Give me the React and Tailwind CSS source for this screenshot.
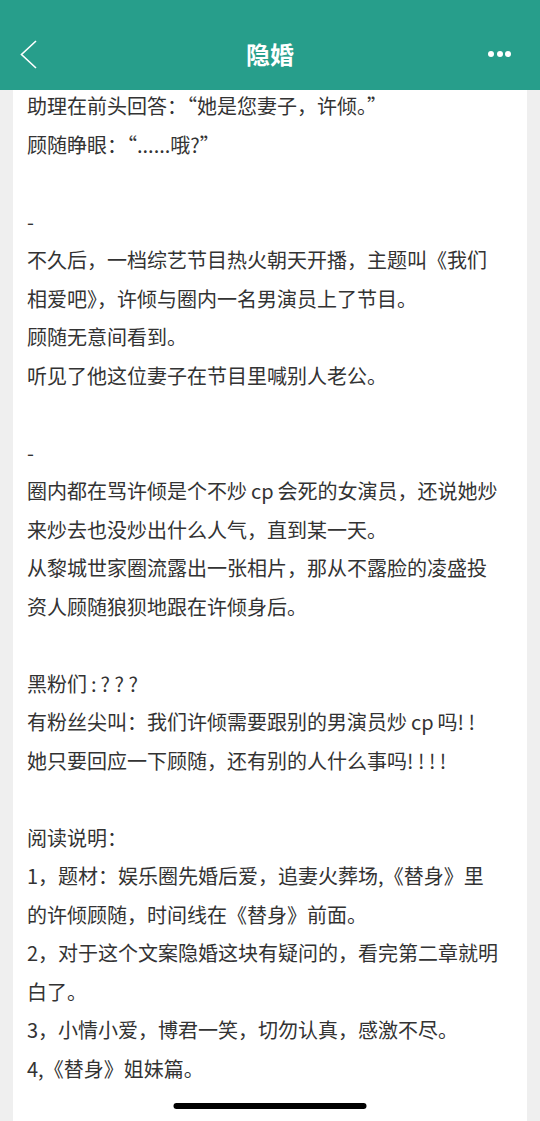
import React from 'react';

const lines = [
  '助理在前头回答：“她是您妻子，许倾。”',
  '顾随睁眼：“......哦?”',
  '',
  '-',
  '不久后，一档综艺节目热火朝天开播，主题叫《我们',
  '相爱吧》，许倾与圈内一名男演员上了节目。',
  '顾随无意间看到。',
  '听见了他这位妻子在节目里喊别人老公。',
  '',
  '-',
  ['圈内都在骂许倾是个不炒', 'cp', '会死的女演员，还说她炒'],
  '来炒去也没炒出什么人气，直到某一天。',
  '从黎城世家圈流露出一张相片，那从不露脸的凌盛投',
  '资人顾随狼狈地跟在许倾身后。',
  '',
  ['黑粉们', ':', '? ? ?'],
  ['有粉丝尖叫：我们许倾需要跟别的男演员炒', 'cp', '吗! !'],
  '她只要回应一下顾随，还有别的人什么事吗! ! ! !',
  '',
  '阅读说明：',
  '1，题材：娱乐圈先婚后爱，追妻火葬场,《替身》里',
  '的许倾顾随，时间线在《替身》前面。',
  '2，对于这个文案隐婚这块有疑问的，看完第二章就明',
  '白了。',
  '3，小情小爱，博君一笑，切勿认真，感激不尽。',
  '4,《替身》姐妹篇。',
];

const Line = ({ text }) => {
  if (Array.isArray(text)) {
    return (
      <div className="whitespace-pre">
        {text[0]}
        <span className="px-[4px]">{text[1]}</span>
        {text[2]}
      </div>
    );
  }
  return <div className="whitespace-pre h-[38.5px]">{text}</div>;
};

export default function App() {
  return (
    <div className="relative h-[1121px] w-[540px] overflow-hidden bg-[#efefef] flex flex-col font-['Noto_Sans_CJK_SC',sans-serif]">
      {/* 顶部导航 */}
      <div className="h-[90px] shrink-0 bg-[#279e8b] pt-[18px] flex items-center justify-between pl-[20px] pr-[29px] relative z-10">
        <svg width="17" height="29" viewBox="0 0 17 29" fill="none">
          <polyline points="16,1 1.5,14.5 16,28" stroke="white" strokeWidth="1.6" />
        </svg>
        <h1 className="absolute left-0 right-0 top-[18px] bottom-0 flex items-center justify-center text-white text-[24px] font-bold">
          隐婚
        </h1>
        <div className="flex gap-[2.3px]">
          <span className="w-[6px] h-[6px] rounded-full bg-white" />
          <span className="w-[6px] h-[6px] rounded-full bg-white" />
          <span className="w-[6px] h-[6px] rounded-full bg-white" />
        </div>
      </div>

      {/* 正文 */}
      <div className="flex-1 mx-[13px] bg-white pl-[14px] -mt-[3px] text-[20px] leading-[38.5px] text-[#333333]">
        {lines.map((t, i) => (
          <Line key={i} text={t} />
        ))}
      </div>

      {/* Home indicator */}
      <div className="absolute left-1/2 -translate-x-1/2 bottom-[12px] w-[193px] h-[6px] rounded-full bg-black" />
    </div>
  );
}
